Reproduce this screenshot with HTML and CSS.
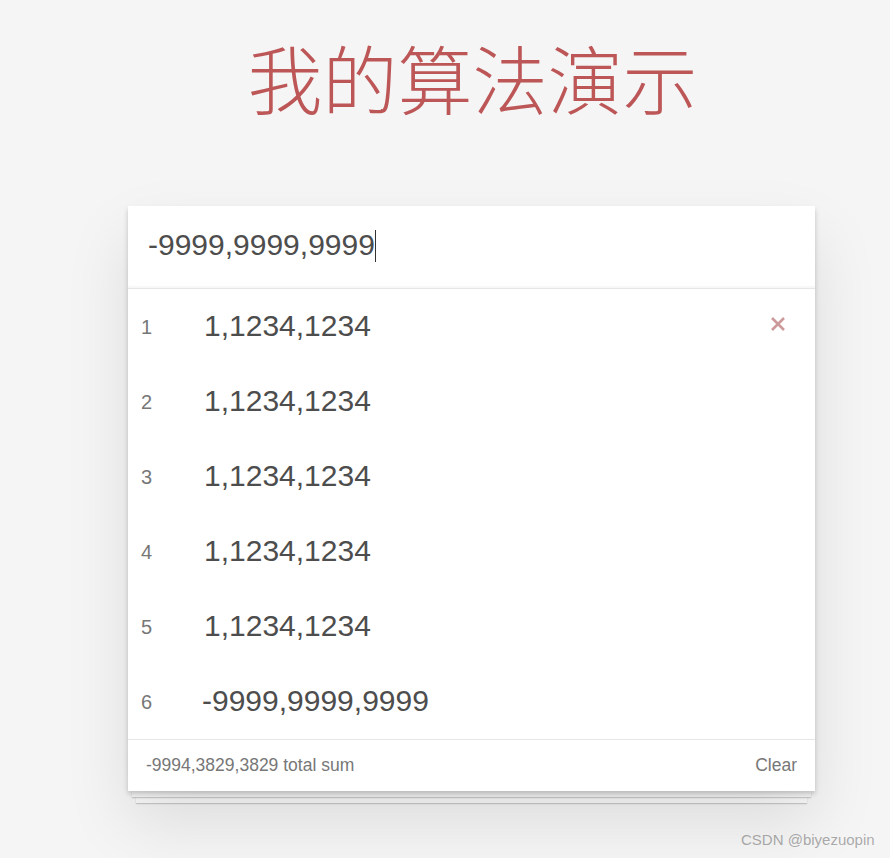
FILE: index.html
```html
<!DOCTYPE html>
<html lang="zh-CN">
<head>
<meta charset="utf-8">
<title>我的算法演示</title>
<link rel="stylesheet" href="styles.css">
</head>
<body>
<div class="app">
  <h1 class="title">我的算法演示</h1>
  <section class="card">
    <div class="new-entry"><span class="entry-text">-9999,9999,9999</span><span class="caret"></span></div>
    <ul class="list">
      <li class="item"><span class="num">1</span><span class="val">1,1234,1234</span>
        <svg class="destroy" width="16" height="16" viewBox="0 0 16 16"><path d="M2 2 L14 14 M14 2 L2 14" stroke="#cc9a9a" stroke-width="2.6" fill="none"/></svg>
      </li>
      <li class="item"><span class="num">2</span><span class="val">1,1234,1234</span></li>
      <li class="item"><span class="num">3</span><span class="val">1,1234,1234</span></li>
      <li class="item"><span class="num">4</span><span class="val">1,1234,1234</span></li>
      <li class="item"><span class="num">5</span><span class="val">1,1234,1234</span></li>
      <li class="item"><span class="num">6</span><span class="val neg">-9999,9999,9999</span></li>
    </ul>
    <footer class="footer">
      <span class="sum">-9994,3829,3829 total sum</span>
      <span class="clear">Clear</span>
    </footer>
  </section>
  <div class="sheet sheet-1"></div>
  <div class="sheet sheet-2"></div>
</div>
<div class="watermark">CSDN @biyezuopin</div>
</body>
</html>
```

FILE: styles.css
```css
html, body {
  margin: 0;
  padding: 0;
  background: #f5f5f5;
  font-family: "Liberation Sans", Arial, "Noto Sans CJK SC", sans-serif;
  color: #4d4d4d;
  height: 100%;
  overflow: hidden;
}

.app {
  width: 687px;
  margin-left: 128px;
  padding-top: 39px;
}

.title {
  margin: 0 0 92px 0;
  text-align: center;
  font-family: "Noto Sans CJK SC", sans-serif;
  font-weight: 300;
  font-size: 75px;
  line-height: 75px;
  color: rgba(175, 47, 47, 0.8);
  padding-left: 2px;
}

.card {
  background: #fff;
  box-shadow: 0 2.5px 5px rgba(0, 0, 0, 0.2), 0 31px 62px rgba(0, 0, 0, 0.1);
  position: relative;
  z-index: 2;
}

.new-entry {
  height: 83px;
  box-sizing: border-box;
  padding: 0 20px;
  display: flex;
  align-items: center;
  font-size: 30px;
  color: #4d4d4d;
  border-bottom: 1px solid #e6e6e6;
  box-shadow: inset 0 -2px 1px rgba(0, 0, 0, 0.03);
}

.entry-text {
  position: relative;
  top: -2px;
}

.caret {
  display: inline-block;
  width: 1px;
  height: 32px;
  background: #333;
  margin-left: 0;
  position: relative;
  top: -1px;
}

.list {
  list-style: none;
  margin: 0;
  padding: 0;
}

.item {
  height: 75px;
  display: flex;
  align-items: center;
  padding-left: 13px;
  padding-right: 29px;
}

.num {
  width: 63px;
  font-size: 20px;
  color: #777;
  position: relative;
  top: 1px;
}

.val {
  font-size: 30px;
  color: #4d4d4d;
  flex: 1;
  position: relative;
  top: -1px;
}

.val.neg {
  margin-left: -2px;
}

.destroy {
  display: block;
  position: relative;
  top: -3px;
}

.footer {
  height: 52px;
  box-sizing: border-box;
  border-top: 1px solid #e6e6e6;
  display: flex;
  align-items: center;
  justify-content: space-between;
  padding: 0 18px 0 18px;
  font-size: 17.5px;
  color: #777;
}

.sheet {
  height: 6px;
  background: #f9f9f9;
  box-shadow: 0 1px 1.5px rgba(0, 0, 0, 0.22);
  position: relative;
}

.sheet-1 {
  margin: 0 4px;
  z-index: 1;
}

.sheet-2 {
  margin: 0 8px;
  z-index: 0;
}

.watermark {
  position: absolute;
  left: 741px;
  top: 831px;
  font-size: 15px;
  color: #aaa;
  text-shadow: 0 0 1px #fff;
}
```
